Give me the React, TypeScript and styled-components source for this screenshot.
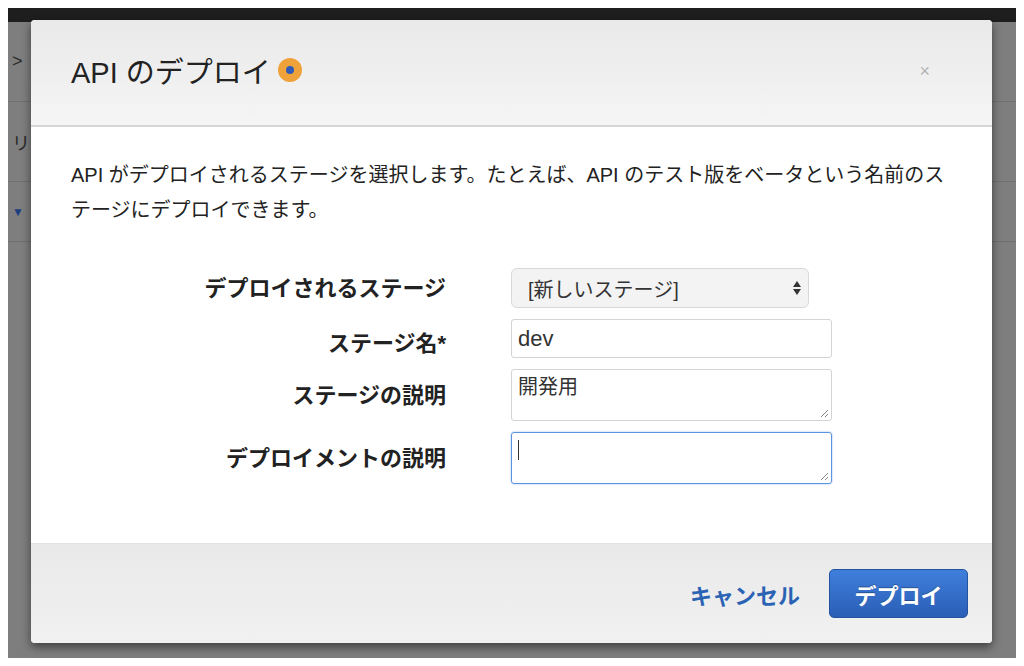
import React from "react";
import styled, { createGlobalStyle } from "styled-components";

const Global = createGlobalStyle`
  html, body { margin: 0; padding: 0; background: #fff; }
  body { font-family: "Liberation Sans", "Noto Sans CJK JP", sans-serif; }
  * { box-sizing: border-box; }
`;

const Frame = styled.div`
  width: 1024px; height: 666px; padding: 8px; background: #fff; position: relative;
`;
const Backdrop = styled.div`
  width: 1008px; height: 650px; background: #7e7e7e; display: flex; flex-direction: column;
  color: #333;
`;
const TopBar = styled.div`
  height: 14px; background: #1e1e1e; flex-shrink: 0;
`;
const BgRow = styled.div<{ $h: number }>`
  height: ${p => p.$h}px; border-bottom: 1px solid #6f6f6f; display: flex; align-items: center;
  padding-left: 4px; font-size: 18px; color: #2a2a2a;
`;
const Modal = styled.div`
  position: absolute; left: 31px; top: 20px; width: 961px; height: 623px;
  background: #fff; border-radius: 4px; overflow: hidden;
  box-shadow: 0 4px 10px rgba(0,0,0,0.5);
  display: flex; flex-direction: column;
`;
const Header = styled.div`
  height: 107px; background: linear-gradient(#e9e9e9, #f5f5f5);
  border-bottom: 2px solid #d6d6d6; display: flex; align-items: flex-start;
  padding: 29px 62px 0 40px; justify-content: space-between;
`;
const Title = styled.h1`
  margin: 0; font-size: 29px; font-weight: normal; color: #222; display: flex; align-items: center; gap: 6px;
`;
const Close = styled.span`
  color: #b4b4b4; font-size: 18px; margin-top: 12px;
`;
const Body = styled.div`
  flex: 1; padding: 31px 40px 0 40px;
`;
const Intro = styled.p`
  margin: 0; font-size: 20px; line-height: 35px; color: #222; width: 880px;
`;
const Form = styled.div`
  margin-top: 40px; display: grid; grid-template-columns: 375px 322px; column-gap: 65px;
  row-gap: 11px; align-items: start;
`;
const Label = styled.label<{ $mt: number }>`
  text-align: right; font-weight: bold; font-size: 22px; color: #222; margin-top: ${p => p.$mt}px;
`;
const Select = styled.div`
  width: 298px; height: 40px; border: 1px solid #d8d8d8; border-radius: 6px; background: #f3f3f3;
  display: flex; align-items: center; justify-content: space-between; padding: 0 6px 0 16px;
  font-size: 20px; color: #333;
`;
const Input = styled.div`
  width: 321px; height: 39px; border: 1px solid #d4d4d4; border-radius: 3px;
  display: flex; align-items: center; padding: 0 6px; font-size: 22px; color: #333;
`;
const TextArea = styled.div<{ $focus?: boolean }>`
  width: 321px; height: 52px; border: 1px solid ${p => (p.$focus ? "#5b93e0" : "#d4d4d4")};
  border-radius: 3px; position: relative; padding: 1px 6px; font-size: 20px; color: #333;
  box-shadow: ${p => (p.$focus ? "0 0 2px #8fb6ef" : "none")};
`;
const Grip = styled.svg`
  position: absolute; right: 2px; bottom: 2px;
`;
const Caret = styled.span`
  display: inline-block; width: 1px; height: 20px; background: #333; margin-top: 6px;
`;
const Footer = styled.div`
  height: 100px; background: linear-gradient(#e9e9e9, #f1f1f1); border-top: 1px solid #e2e2e2;
  display: flex; align-items: center; justify-content: flex-end; padding: 0 24px 0 0; gap: 29px;
`;
const Cancel = styled.span`
  color: #2b63b4; font-weight: bold; font-size: 22px;
`;
const Primary = styled.button`
  width: 139px; height: 49px; border-radius: 5px; border: 1px solid #2453a0;
  background: linear-gradient(#3f7fdc, #2a5eb6); color: #fff; font-weight: bold; font-size: 22px;
  font-family: inherit; text-shadow: 0 -1px 0 rgba(0,0,0,0.3);
`;

const grip = (
  <Grip width="10" height="10" viewBox="0 0 10 10">
    <path d="M9 2 L2 9 M9 6 L6 9" stroke="#888" strokeWidth="1" />
  </Grip>
);

export default function App() {
  return (
    <Frame>
      <Global />
      <Backdrop>
        <TopBar />
        <BgRow $h={80}>&gt;</BgRow>
        <BgRow $h={80}>リ</BgRow>
        <BgRow $h={60}><span style={{ color: "#1c3f80", fontSize: 12 }}>▼</span></BgRow>
      </Backdrop>
      <Modal>
        <Header>
          <Title>
            API のデプロイ
            <svg width="26" height="26" viewBox="0 0 26 26">
              <circle cx="13" cy="13" r="12" fill="#f0a23a" />
              <circle cx="13" cy="13" r="4" fill="#2e5bb8" />
            </svg>
          </Title>
          <Close>×</Close>
        </Header>
        <Body>
          <Intro>
            API がデプロイされるステージを選択します。たとえば、API のテスト版をベータという名前のステージにデプロイできます。
          </Intro>
          <Form>
            <Label $mt={2}>デプロイされるステージ</Label>
            <Select>
              [新しいステージ]
              <svg width="10" height="18" viewBox="0 0 10 18">
                <path d="M5 2 L9 8 L1 8 Z M5 16 L9 10 L1 10 Z" fill="#333" />
              </svg>
            </Select>
            <Label $mt={6}>ステージ名*</Label>
            <Input>dev</Input>
            <Label $mt={8}>ステージの説明</Label>
            <TextArea>開発用{grip}</TextArea>
            <Label $mt={8}>デプロイメントの説明</Label>
            <TextArea $focus><Caret />{grip}</TextArea>
          </Form>
        </Body>
        <Footer>
          <Cancel>キャンセル</Cancel>
          <Primary>デプロイ</Primary>
        </Footer>
      </Modal>
    </Frame>
  );
}
